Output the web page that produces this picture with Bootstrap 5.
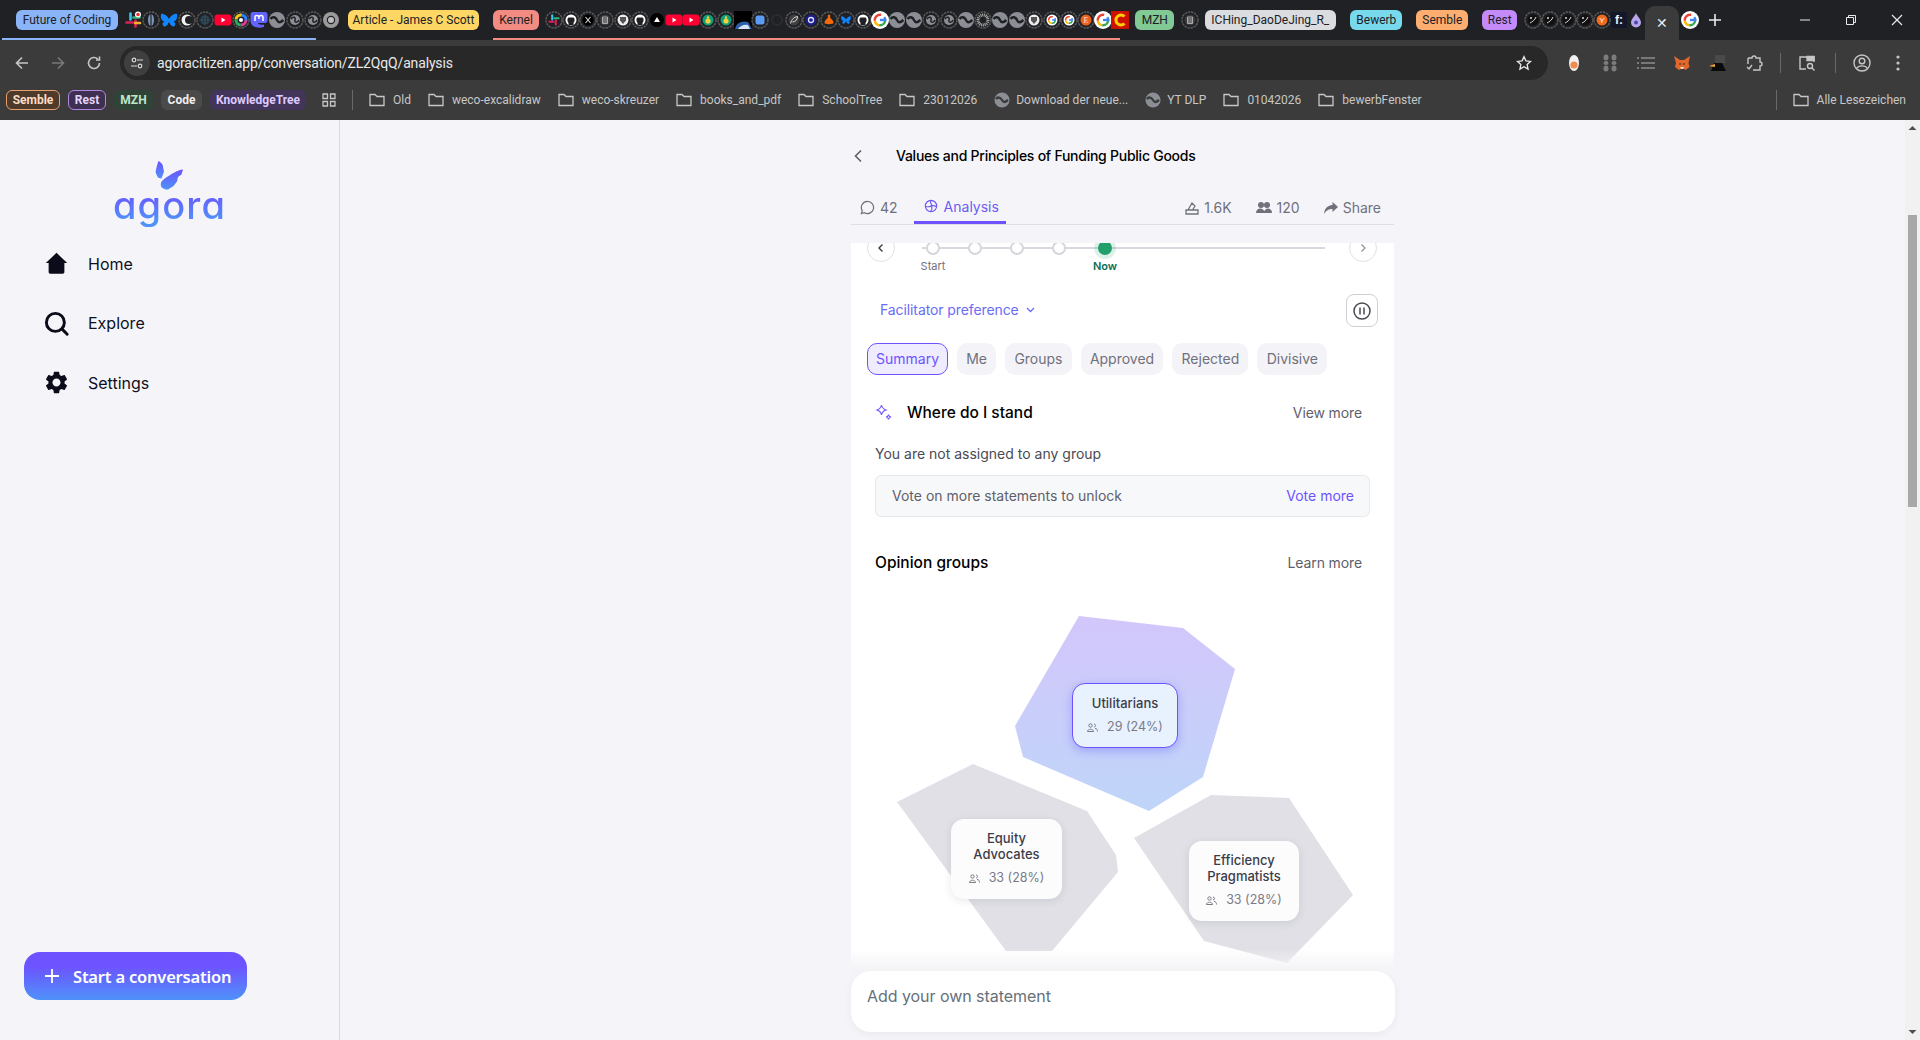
<!DOCTYPE html>
<html lang="en">
<head>
  <meta charset="UTF-8" />
  <title>Agora - Analysis</title>
  <link href="https://cdn.jsdelivr.net/npm/bootstrap@5.3.3/dist/css/bootstrap.min.css" rel="stylesheet">
  <style>
    html, body { height: 1040px; overflow: hidden; }
    body { font-family: Inter, "Noto Sans", sans-serif; background: #f5f5f9; color: #0f0f1e; }

    /* browser chrome */
    .tabstrip { height: 40px; background: #202124; font: 12px Roboto, sans-serif; color: #202124; }
    .tab-grp { position: relative; height: 40px; }
    .tab-grp::after { content: ""; position: absolute; left: 2px; bottom: 0; height: 2px; background: var(--grp); }
    .grp-blue { --grp: #8ab4f8; } .grp-blue::after { width: 314px; }
    .grp-red { --grp: #f28b82; margin-left: 14px; } .grp-red::after { left: 0; width: 627px; }
    .chip { height: 20px; border-radius: 6px; line-height: 20px; text-align: center; overflow: hidden; white-space: nowrap; flex: none; }
    .c-future { width: 102px; margin-left: 16px; background: #8ab4f8; }
    .c-article { width: 131px; margin-left: 8px; background: #fdd663; }
    .c-kernel { width: 46px; margin-left: 0; background: #f28b82; }
    .c-mzh { width: 39px; margin-left: 7px; background: #81c995; }
    .c-iching { width: 131px; margin-left: 6px; background: #dadce0; text-align: left; padding-left: 6px; }
    .c-bewerb { width: 52px; margin-left: 14px; background: #78d9ec; }
    .c-semble { width: 52px; margin-left: 14px; background: #fcad70; }
    .c-rest { width: 35px; margin-left: 14px; background: #c58af9; }
    .favs { display: flex; flex: none; }
    .favs svg { flex: none; display: block; }
    .fav18 svg { width: 18px; height: 18px; }
    .fav17 svg { width: 18px; height: 18px; margin-right: -.85px; }
    .favs-1 { margin-left: 6px; }
    .favs-2 { margin-left: 6px; }
    .favs-3 { margin-left: 7px; }
    .favs-4 { margin-left: 7px; }
    .active-tab { width: 34px; height: 34px; margin: 6px 0 0 1px; background: #3b3b3b; border-radius: 10px 10px 0 0; color: #e8eaed; font-size: 14px; flex: none; }
    .new-fav { margin-left: 2px; }
    .win-btn { width: 46px; color: #e8eaed; }

    .toolbar { height: 41px; background: #3b3b3b; padding: 5px 4px 0 4px; }
    .slot { width: 36px; height: 34px; flex: none; }
    .url-pill { height: 34px; margin-left: 8px; background: #282828; color: #e8e8e8; font: 14px Roboto, sans-serif; letter-spacing: -.16px; }
    .url-tune { width: 26px; height: 26px; margin: 0 7px 0 4px; background: #3f3f3f; }
    .tool-sep { width: 1px; height: 20px; background: #6a6a6a; flex: none; }
    .sep-wide { margin-left: 10px; }

    .bookmarks { height: 39px; background: #3b3b3b; padding: 0 0 2px 6px; font: 12px Roboto, sans-serif; color: #c7c7c7; white-space: nowrap; }
    .bm-chip { height: 20px; line-height: 18px; border: 1px solid transparent; border-radius: 6px; text-align: center; font-weight: 700; margin-right: 8px; flex: none; }
    .bm-semble { width: 54px; background: #4d3a2b; border-color: #e8a06c; color: #fbdcc3; }
    .bm-rest { width: 38px; background: #3e3050; border-color: #b386e6; color: #e7d4fb; }
    .bm-mzh { width: 39px; background: #2f4436; color: #bfe6cb; }
    .bm-code { width: 41px; background: #4a4a4a; color: #eee; }
    .bm-tree { width: 96px; background: #43345a; color: #dccbff; }
    .bm-item { display: flex; align-items: center; gap: 8px; margin-right: 17px; flex: none; }
    .bm-item svg { flex: none; }
    .bm-site { gap: 6px; }
    .bm-all { margin: 0 14px 0 16px; }

    /* page */
    .page-area { height: 920px; }
    .side { width: 340px; flex: none; border-right: 1px solid #dcdce0; }
    .wings { display: block; margin: 40px auto 0; }
    .logo-word { width: 130px; height: 44px; margin: -7px auto 0; font-size: 38px; line-height: 44px; font-weight: 500; letter-spacing: 1.1px; font-feature-settings: "cv11"; text-align: center;
      background: linear-gradient(#6c53ff 20%, #4f92f9 85%); -webkit-background-clip: text; background-clip: text; color: transparent; }
    .side-nav { margin-top: 7px; padding-left: 43px; }
    .side-item { height: 59.5px; gap: 18px; font-size: 16px; color: #0f0f1e; text-decoration: none; }
    .start-btn { width: 223px; height: 48px; margin: auto 0 40px 24px; padding: 0 0 0 20px; gap: 13px; border: 0; border-radius: 16px; color: #fff; white-space: nowrap;
      background: linear-gradient(#6c53ff 30%, #4f92f9); font: 600 16.5px "Noto Sans", sans-serif; letter-spacing: -.2px; }

    .center-wrap { min-width: 0; }
    .center-col { width: 543px; height: 920px; }
    .conv-head { height: 71px; }
    .back-ico { margin-left: 2px; }
    .conv-title { margin-left: 31px; font-size: 14px; font-weight: 500; letter-spacing: -.25px; color: #000; }
    .conv-tabs { height: 34px; padding-left: 9px; border-bottom: 1px solid #dedee3; font-size: 14px; color: #70707c; }
    .conv-tab { height: 33px; gap: 5px; }
    .tab-on { width: 92px; gap: 6px; margin-left: 16px; padding-left: 10px; color: #6c5cf5; border-bottom: 3px solid #6c53ff; }
    .stat-last { margin-right: 13px; }
    .panel { position: relative; flex: 1 1 auto; min-height: 0; overflow: hidden; background: #fff; margin-top: 18px; }
    .panel-fade { position: absolute; left: 0; right: 0; bottom: 0; height: 22px; background: linear-gradient(rgba(245,245,249,0), #f3f3f6); pointer-events: none; }
    .tl-row { margin-top: -9px; padding: 0 17px 0 16px; height: 40px; }
    .tl-btn { width: 28px; height: 28px; padding: 0; flex: none; background: #fff; border: 1px solid #e2e2e6; border-radius: 50%; }
    .tl-track { width: 403px; height: 33px; margin: 7px 0 0 27px; background: linear-gradient(#d8d8de, #d8d8de) 0 6px / 100% 2px no-repeat; }
    .tl-stops { margin-left: -10px; }
    .tl-stop { width: 42px; font-size: 11px; line-height: 14px; color: #70707c; }
    .tl-stop i { width: 14px; height: 14px; margin-bottom: 4px; background: #fff; border: 2px solid #d6d6dc; border-radius: 50%; }
    .tl-now { width: 46px; margin-left: 2px; color: #0d6e57; font-weight: 600; }
    .tl-now i { background: #229f6b; border-color: #229f6b; box-shadow: 0 0 0 4px rgba(34,159,107,.15); }
    .fac-row { height: 33px; margin-top: 20px; padding: 0 16px 0 29px; }
    .fac-link { gap: 7px; margin-top: -2px; font-size: 14px; letter-spacing: -.1px; color: #6a6cf6; }
    .pause-btn { width: 32px; height: 33px; padding: 0; background: #fff; border: 1px solid #cfcfd5; border-radius: 8px; }
    .pill-row { gap: 9px; margin-top: 16px; padding: 0 16px; }
    .sect-pill { height: 32px; padding: 0 9.2px; line-height: 32px; border-radius: 10px; background: #f4f4f8; color: #70707c; font-size: 14px; }
    .sect-pill.pill-on { padding: 0 8px; line-height: 30px; border: 1px solid #6c53ff; background: #efecff; color: #6c53ff; }
    .sect-head { height: 24px; padding: 0 32px 0 24px; }
    .sect-title { font-size: 15.5px; font-weight: 500; color: #000; }
    .sect-more { margin-top: -1px; font-size: 14px; letter-spacing: -.12px; color: #5f5f6b; }
    .stand-ico { margin-right: 14px; }
    .m-stand { margin-top: 26px; }
    .not-assigned { margin: 19px 0 0 24px; font-size: 14px; line-height: 20px; color: #4a4a55; }
    .unlock-box { height: 42px; margin: 11px 24px 0 24px; padding: 0 15px 2px 16px; background: #f7f8f9; border: 1px solid #e8e9ec; border-radius: 6px; font-size: 14px; color: #5f5f6b; }
    .unlock-box a { color: #6c53ff; text-decoration: none; }
    .m-opinion { margin-top: 34px; }

    /* free canvas: the polygons of the opinion map */
    .op-map { position: relative; width: 543px; height: 386px; margin-top: 10px; }
    .op-map > svg { display: block; }
    .op-card { position: absolute; padding-top: 11px; background: #fcfcfd; border-radius: 13px; box-shadow: 0 2px 8px rgba(30,30,60,.1); text-align: center; font-size: 13px; line-height: 16px; font-weight: 500; color: #3c3c48; }
    .op-card small { display: flex; justify-content: center; align-items: center; gap: 9px; margin-top: 8px; font-size: 12.5px; font-weight: 400; color: #7a7a85; }
    .op-util { left: 221px; top: 98px; width: 106px; height: 65px; background: #e8f2ff; border: 1px solid #6c53ff; box-shadow: 0 3px 10px rgba(80,80,255,.35); }
    .op-eq { left: 100px; top: 234px; width: 111px; height: 80px; }
    .op-eff { left: 338px; top: 256px; width: 110px; height: 80px; }

    .add-bar { width: 544px; height: 61px; margin-bottom: 8px; padding: 0 0 11px 16px; flex: none; background: #fff; border-radius: 20px; box-shadow: 0 2px 8px rgba(0,0,0,.05); font-size: 16px; letter-spacing: -.05px; color: #66707a; }
    .scroll-rail { width: 15px; flex: none; background: #f1f1f1; }
    .scroll-thumb { width: 9px; height: 292px; margin: 79px 0 auto 3px; background: #a8a8a8; }
    .scroll-cap { height: 16px; }
  </style>
</head>
<body class="d-flex flex-column">

  <div class="tabstrip d-flex align-items-center">
    <div class="tab-grp grp-blue d-flex align-items-center">
      <div class="chip c-future">Future of Coding</div>
      <div class="favs fav18 favs-1" data-favs="slack eye bsky moon cross yt wheel masto globe ringglobe ringglobe chrome"></div>
    </div>
    <div class="chip c-article">Article - James C Scott</div>
    <div class="tab-grp grp-red d-flex align-items-center">
      <div class="chip c-kernel">Kernel</div>
      <div class="favs fav17 favs-2" data-favs="rslack rgit rx rtrash rshield rgit tri yt yt rbug rbug space rblue faint rfeather rgear rorange rbsky rgit g globe globe ringglobe ringglobe globe rdots globe globe rshield rg rg re g cc"></div>
    </div>
    <div class="chip c-mzh">MZH</div>
    <div class="favs fav18 favs-3" data-favs="rtrash"></div>
    <div class="chip c-iching">ICHing_DaoDeJing_R_</div>
    <div class="chip c-bewerb">Bewerb</div>
    <div class="chip c-semble">Semble</div>
    <div class="chip c-rest">Rest</div>
    <div class="favs fav17 favs-4" data-favs="rf rf rf rf ry fcolon drop"></div>
    <div class="active-tab d-flex align-items-center justify-content-center">✕</div>
    <div class="favs fav18 new-fav" data-favs="g"></div>
    <svg class="ms-2" width="16" height="16" viewBox="0 0 16 16"><path d="M8 2v12M2 8h12" stroke="#e8eaed" stroke-width="1.6"/></svg>
    <div class="win-btn ms-auto d-flex justify-content-center"><svg width="12" height="12" viewBox="0 0 12 12"><path d="M1 6h10" stroke="#c8c8c8" stroke-width="1.2"/></svg></div>
    <div class="win-btn d-flex justify-content-center"><svg width="12" height="12" viewBox="0 0 12 12" fill="none" stroke="#e8eaed"><path d="M1.5 3.5h7v7h-7zM3.5 3.5v-2h7v7h-2"/></svg></div>
    <div class="win-btn d-flex justify-content-center"><svg width="14" height="14" viewBox="0 0 14 14"><path d="M2 2l10 10M12 2L2 12" stroke="#e8eaed" stroke-width="1.2"/></svg></div>
  </div>

  <div class="toolbar d-flex align-items-center">
    <div class="slot d-flex align-items-center justify-content-center"><svg width="16" height="16" viewBox="0 0 16 16" fill="none" stroke="#c4c7c5" stroke-width="1.6"><path d="M14 8H2.5M8 2.5L2.5 8 8 13.5"/></svg></div>
    <div class="slot d-flex align-items-center justify-content-center"><svg width="16" height="16" viewBox="0 0 16 16" fill="none" stroke="#77797a" stroke-width="1.6"><path d="M2 8h11.5M8 2.5L13.5 8 8 13.5"/></svg></div>
    <div class="slot d-flex align-items-center justify-content-center"><svg width="16" height="16" viewBox="0 0 16 16" fill="none" stroke="#c4c7c5" stroke-width="1.6"><path d="M13.5 8a5.5 5.5 0 1 1-1.7-4"/><path d="M13.5 1.5V5H10"/></svg></div>
    <div class="url-pill rounded-pill flex-grow-1 d-flex align-items-center">
      <div class="url-tune rounded-circle d-flex align-items-center justify-content-center"><svg width="14" height="14" viewBox="0 0 14 14" fill="none" stroke="#d8d8d8" stroke-width="1.2"><circle cx="4" cy="4" r="1.8"/><path d="M7 4h6M1 10h6"/><circle cx="10" cy="10" r="1.8"/></svg></div>
      <span>agoracitizen.app/conversation/ZL2QqQ/analysis</span>
      <svg class="ms-auto me-3" width="16" height="16" viewBox="0 0 24 24" fill="none" stroke="#e8e8e8" stroke-width="2"><path d="M12 2.5l2.9 6.3 6.9.8-5.1 4.7 1.4 6.8-6.1-3.5-6.1 3.5 1.4-6.8L2.3 9.600l6.9-.8z"/></svg>
    </div>
    <div class="slot ms-2 d-flex align-items-center justify-content-center"><svg width="12" height="18" viewBox="0 0 12 18"><ellipse cx="6" cy="9" rx="5" ry="8" fill="#f1f1f1"/><circle cx="6" cy="11" r="3.6" fill="#f28b4b"/></svg></div>
    <div class="slot d-flex align-items-center justify-content-center"><svg width="18" height="18" viewBox="0 0 18 18" fill="#7c7c7c"><ellipse cx="5" cy="3.5" rx="2.5" ry="3"/><ellipse cx="13" cy="3.5" rx="2.5" ry="3"/><ellipse cx="5" cy="9" rx="2.5" ry="2"/><ellipse cx="13" cy="9" rx="2.5" ry="2"/><ellipse cx="5" cy="14.5" rx="2.5" ry="3"/><ellipse cx="13" cy="14.5" rx="2.5" ry="3"/></svg></div>
    <div class="slot d-flex align-items-center justify-content-center"><svg width="18" height="14" viewBox="0 0 18 14" stroke="#8d8d8d" stroke-width="1.5"><path d="M4 2h14M4 7h14M4 12h14M0 2h2M0 7h2M0 12h2"/></svg></div>
    <div class="slot d-flex align-items-center justify-content-center"><svg width="18" height="18" viewBox="0 0 18 18"><path d="M1 2l6 4h4l6-4-1.5 7 1 4-4 3-1.5-1h-3L6 16l-4-3 1-4z" fill="#e2672a"/><path d="M6.5 9l2 1-2 1zM11.5 9l-2 1 2 1z" fill="#2a2a2a"/><path d="M7 13h4l-1 2H8z" fill="#f0d8c0"/></svg></div>
    <div class="slot d-flex align-items-center justify-content-center"><svg width="18" height="18" viewBox="0 0 18 18"><path d="M6 1h10v8H6z" fill="#4a4a4a"/><path d="M2 17l3-8h8l4 8z" fill="#0a0a0a"/><path d="M0 12l6-2v3z" fill="#f2a13a"/></svg></div>
    <div class="slot d-flex align-items-center justify-content-center"><svg width="18" height="18" viewBox="0 0 18 18" fill="none" stroke="#c4c7c5" stroke-width="1.4"><path d="M3 4h4a2 2 0 0 1 4 0h4v4a2 2 0 0 1 0 4v4H8M3 4v6"/><path d="M2 13l2 2 3-4"/></svg></div>
    <div class="tool-sep ms-2"></div>
    <div class="slot ms-2 d-flex align-items-center justify-content-center"><svg width="18" height="18" viewBox="0 0 18 18" fill="none" stroke="#c4c7c5" stroke-width="1.4"><path d="M8 15H2V3h14v5"/><path d="M9 2.5h7v4H9z" fill="#c4c7c5"/><circle cx="12" cy="12" r="2.5"/><path d="M14 14l2.5 2.5"/></svg></div>
    <div class="tool-sep sep-wide"></div>
    <div class="slot ms-2 d-flex align-items-center justify-content-center"><svg width="18" height="18" viewBox="0 0 18 18" fill="none" stroke="#c4c7c5" stroke-width="1.4"><circle cx="9" cy="9" r="8"/><circle cx="9" cy="7" r="2.8"/><path d="M3.5 14.5c2-3.5 9-3.5 11 0"/></svg></div>
    <div class="slot d-flex align-items-center justify-content-center"><svg width="4" height="16" viewBox="0 0 4 16" fill="#c4c7c5"><circle cx="2" cy="2" r="1.6"/><circle cx="2" cy="8" r="1.6"/><circle cx="2" cy="14" r="1.6"/></svg></div>
  </div>

  <div class="bookmarks d-flex align-items-center">
    <div class="bm-chip bm-semble">Semble</div>
    <div class="bm-chip bm-rest">Rest</div>
    <div class="bm-chip bm-mzh">MZH</div>
    <div class="bm-chip bm-code">Code</div>
    <div class="bm-chip bm-tree">KnowledgeTree</div>
    <svg class="ms-2" width="14" height="14" viewBox="0 0 14 14" fill="none" stroke="#c7c7c7" stroke-width="1.3"><path d="M1 1h4.5v4.5H1zM8.5 1H13v4.5H8.5zM1 8.5h4.5V13H1zM8.5 8.5H13V13H8.5z"/></svg>
    <div class="tool-sep mx-3"></div>
    <div id="bmList" class="d-flex align-items-center"></div>
    <div class="tool-sep ms-auto"></div>
    <div class="bm-item bm-all"><svg width="16" height="14" viewBox="0 0 16 14" fill="none" stroke="#c7c7c7" stroke-width="1.3"><path d="M1 1.5h5l2 2h7v9H1z"/></svg><span>Alle Lesezeichen</span></div>
  </div>

  <div class="page-area d-flex">
    <aside class="side d-flex flex-column">
      <svg class="wings" width="30" height="30" viewBox="0 0 30 30">
        <defs><linearGradient id="wingGrad" x1="0" y1="0" x2="0" y2="1"><stop offset="0" stop-color="#6c53ff"/><stop offset="1" stop-color="#4f92f9"/></linearGradient></defs>
        <path d="M3.500 1C6 2.500 8.500 5 8 7L9 11.500 6.500 18.500C4.500 18.500 3.500 18 2.800 17.300 1 14 .3 12 .8 10.700 1.500 7 2.500 4 3.500 1z" fill="url(#wingGrad)"/>
        <path d="M28 9.500l-1.500 5-3.500 2.500-1 4.500-3.500 4.500-5.500 3.500c-2.500.2-5.300-.8-6.800-2.800-.8-2-.4-4 .8-5.600 1.800-2.300 3.600-3.400 5.700-4.700 4.500-2.500 9.500-6.300 15.300-6.900z" fill="url(#wingGrad)"/>
      </svg>
      <div class="logo-word">agora</div>
      <nav class="side-nav">
        <a class="side-item d-flex align-items-center" href="#"><svg width="27" height="27" viewBox="0 0 24 24" fill="#0b0b1a"><path d="M12 2.5L2.5 11.5H5v8c0 1 .6 1.500 1.500 1.500h11c.9 0 1.500-.5 1.500-1.500v-8h2.500z"/></svg>Home</a>
        <a class="side-item d-flex align-items-center" href="#"><svg width="27" height="27" viewBox="0 0 24 24" fill="none" stroke="#0b0b1a" stroke-width="2.6"><circle cx="11" cy="11" r="8"/><path d="M17 17l4.5 4.5" stroke-linecap="round"/></svg>Explore</a>
        <a class="side-item d-flex align-items-center" href="#"><svg width="27" height="27" viewBox="0 0 24 24" fill="#0b0b1a"><path d="M19.14 12.94c.04-.3.06-.61.06-.94 0-.32-.02-.64-.07-.94l2.03-1.58c.18-.14.23-.41.12-.61l-1.92-3.32c-.12-.22-.37-.29-.59-.22l-2.39.96c-.5-.38-1.03-.7-1.62-.94l-.36-2.54c-.04-.24-.24-.41-.48-.41h-3.84c-.24 0-.43.17-.47.41l-.36 2.54c-.59.24-1.13.57-1.62.94l-2.39-.96c-.22-.08-.47 0-.59.22L2.74 8.87c-.12.21-.08.47.12.61l2.03 1.58c-.05.3-.09.63-.09.94s.02.64.07.94l-2.03 1.58c-.18.14-.23.41-.12.61l1.92 3.32c.12.22.37.29.59.22l2.39-.96c.5.38 1.03.7 1.62.94l.36 2.54c.05.24.24.41.48.41h3.84c.24 0 .44-.17.47-.41l.36-2.54c.59-.24 1.13-.56 1.62-.94l2.39.96c.22.08.47 0 .59-.22l1.92-3.32c.12-.22.07-.47-.12-.61l-2.01-1.58zM12 15.6c-1.98 0-3.6-1.62-3.6-3.6s1.62-3.6 3.6-3.6 3.6 1.62 3.6 3.6-1.62 3.6-3.6 3.6z"/></svg>Settings</a>
      </nav>
      <button class="start-btn d-flex align-items-center"><svg width="16" height="16" viewBox="0 0 16 16"><path d="M8 1v14M1 8h14" stroke="#fff" stroke-width="1.8"/></svg>Start a conversation</button>
    </aside>

    <main class="center-wrap flex-grow-1 d-flex justify-content-center">
      <div class="center-col d-flex flex-column">
        <div class="conv-head d-flex align-items-center">
          <svg class="back-ico" width="12" height="14" viewBox="0 0 12 14" fill="none" stroke="#5f5f6b" stroke-width="1.6"><path d="M8 1.5L2.5 7 8 12.5"/></svg>
          <div class="conv-title">Values and Principles of Funding Public Goods</div>
        </div>
        <div class="conv-tabs d-flex align-items-start">
          <div class="conv-tab d-flex align-items-center"><svg width="15" height="15" viewBox="0 0 16 16" fill="none" stroke="#70707c" stroke-width="1.3"><path d="M8 1.5a6.500 6.500 0 1 1-3.300 12.100L1.500 14.500l.9-3.100A6.500 6.500 0 0 1 8 1.500z"/></svg>42</div>
          <div class="conv-tab tab-on d-flex align-items-center"><svg width="14" height="14" viewBox="0 0 16 16" fill="none" stroke="#6c5cf5" stroke-width="1.3"><circle cx="8" cy="8" r="6.5"/><path d="M8 1.5C5 5 11 6 8 8s-6 0-6.500 1M8 8c2 2 1 5-1 6.500M8 8c3-1 5 0 6.500 1"/></svg>Analysis</div>
          <div class="conv-tab ms-auto d-flex align-items-center"><svg width="14" height="15" viewBox="0 0 14 15" fill="none" stroke="#70707c" stroke-width="1.3"><path d="M1 10h12v4H1zM3 10l4-7 3 3-2.500 4"/></svg>1.6K</div>
          <div class="conv-tab ms-4 d-flex align-items-center"><svg width="16" height="13" viewBox="0 0 16 13" fill="#70707c"><circle cx="5" cy="4" r="3"/><circle cx="11" cy="4" r="3"/><path d="M0 12c0-6 8-6 9 0zM8 12c0-6 8-6 8 0z"/></svg>120</div>
          <div class="conv-tab ms-4 stat-last d-flex align-items-center"><svg width="14" height="12" viewBox="0 0 14 12" fill="#70707c"><path d="M8.500 0L14 5 8.500 10V7C5 7 2.500 8 0 12 .5 7 3 3.500 8.500 3z"/></svg>Share</div>
        </div>

        <div class="panel">
          <div class="tl-row d-flex align-items-start">
            <button class="tl-btn d-flex align-items-center justify-content-center"><svg width="10" height="10" viewBox="0 0 10 10" fill="none" stroke="#3c3c48" stroke-width="1.4"><path d="M6.5 1.5L3 5l3.5 3.5"/></svg></button>
            <div class="tl-track">
              <div class="tl-stops d-flex">
                <div class="tl-stop d-flex flex-column align-items-center"><i></i>Start</div>
                <div class="tl-stop d-flex flex-column align-items-center"><i></i></div>
                <div class="tl-stop d-flex flex-column align-items-center"><i></i></div>
                <div class="tl-stop d-flex flex-column align-items-center"><i></i></div>
                <div class="tl-stop tl-now d-flex flex-column align-items-center"><i></i>Now</div>
              </div>
            </div>
            <button class="tl-btn ms-auto d-flex align-items-center justify-content-center"><svg width="10" height="10" viewBox="0 0 10 10" fill="none" stroke="#9a9aa4" stroke-width="1.4"><path d="M3.5 1.5L7 5 3.5 8.5"/></svg></button>
          </div>

          <div class="fac-row d-flex align-items-center justify-content-between">
            <div class="fac-link d-flex align-items-center">Facilitator preference <svg width="9" height="6" viewBox="0 0 9 6" fill="none" stroke="#6a6cf6" stroke-width="1.3"><path d="M1 1l3.5 3.5L8 1"/></svg></div>
            <button class="pause-btn d-flex align-items-center justify-content-center"><svg width="18" height="18" viewBox="0 0 18 18" fill="none" stroke="#4a4a55" stroke-width="1.5"><circle cx="9" cy="9" r="8"/><path d="M7 5.5v7M11 5.500v7"/></svg></button>
          </div>

          <div class="pill-row d-flex">
            <div class="sect-pill pill-on">Summary</div>
            <div class="sect-pill">Me</div>
            <div class="sect-pill">Groups</div>
            <div class="sect-pill">Approved</div>
            <div class="sect-pill">Rejected</div>
            <div class="sect-pill">Divisive</div>
          </div>

          <div class="sect-head m-stand d-flex align-items-center">
            <svg class="stand-ico" width="18" height="18" viewBox="0 0 18 18" fill="none" stroke="#6c53ff" stroke-width="1.1"><path d="M6.5 1C7 4 8 5 11 6 8 7 7 8 6.500 11 6 8 5 7 2 6 5 5 6 4 6.500 1zM13.500 10.500c.2 1.500 1 2.300 2.500 2.500-1.500.2-2.300 1-2.500 2.500-.2-1.500-1-2.300-2.500-2.500 1.500-.2 2.300-1 2.500-2.500z"/></svg>
            <div class="sect-title">Where do I stand</div>
            <div class="sect-more ms-auto">View more</div>
          </div>
          <div class="not-assigned">You are not assigned to any group</div>
          <div class="unlock-box d-flex align-items-center justify-content-between">
            <span>Vote on more statements to unlock</span>
            <a href="#">Vote more</a>
          </div>

          <div class="sect-head m-opinion d-flex align-items-center">
            <div class="sect-title">Opinion groups</div>
            <div class="sect-more ms-auto">Learn more</div>
          </div>

          <div class="op-map">
            <svg width="543" height="386" viewBox="0 0 543 386">
              <defs><linearGradient id="utilGrad" x1="0" y1="0" x2="0" y2="1"><stop offset="0" stop-color="#d3c6fb"/><stop offset="1" stop-color="#bfd5f9"/></linearGradient></defs>
              <polygon points="228,31 332,43 384,84 352,192 298,226 172,172 164,141" fill="url(#utilGrad)"/>
              <polygon points="122,179 236,226 265,270 267,287 201,366 155,366 46,217" fill="#e0e0e6"/>
              <polygon points="360,210 438,213 502,310 436,378 353,356 283,253" fill="#e0e0e6"/>
            </svg>
            <div class="op-card op-util">Utilitarians<small><svg width="11" height="9" viewBox="0 0 11 9" fill="none" stroke="#7a7a85"><circle cx="3.5" cy="2.5" r="1.7"/><path d="M.5 8.500c0-3 6-3 6 0zM7 1c2 0 2 3 0 3M8 5.500c2 0 2.500 1.500 2.500 3"/></svg>29 (24%)</small></div>
            <div class="op-card op-eq">Equity<br>Advocates<small><svg width="11" height="9" viewBox="0 0 11 9" fill="none" stroke="#7a7a85"><circle cx="3.5" cy="2.5" r="1.7"/><path d="M.5 8.500c0-3 6-3 6 0zM7 1c2 0 2 3 0 3M8 5.500c2 0 2.500 1.500 2.500 3"/></svg>33 (28%)</small></div>
            <div class="op-card op-eff">Efficiency<br>Pragmatists<small><svg width="11" height="9" viewBox="0 0 11 9" fill="none" stroke="#7a7a85"><circle cx="3.5" cy="2.5" r="1.7"/><path d="M.5 8.500c0-3 6-3 6 0zM7 1c2 0 2 3 0 3M8 5.500c2 0 2.500 1.500 2.500 3"/></svg>33 (28%)</small></div>
          </div>
          <div class="panel-fade"></div>
        </div>

        <div class="add-bar d-flex align-items-center">Add your own statement</div>
      </div>
    </main>

    <div class="scroll-rail d-flex flex-column">
      <svg class="scroll-cap" width="15" height="16" viewBox="0 0 15 16"><path d="M3.5 10l4-4 4 4z" fill="#505050"/></svg>
      <div class="scroll-thumb"></div>
      <svg class="scroll-cap" width="15" height="16" viewBox="0 0 15 16"><path d="M3.5 6l4 4 4-4z" fill="#505050"/></svg>
    </div>
  </div>

  <script src="https://cdn.jsdelivr.net/npm/bootstrap@5.3.3/dist/js/bootstrap.bundle.min.js"></script>
  <script>
    // tab favicons, drawn in an 18x18 box
    const ring = '<circle cx="9" cy="9" r="8" fill="none" stroke="#5c5c5c" stroke-width="1.4" stroke-dasharray="2.4 .8"/>';
    const gArcs = (r, w) => {
      const c = 2 * Math.PI * r;
      const arc = (col, len, off) => `<circle cx="9" cy="9" r="${r}" fill="none" stroke="${col}" stroke-width="${w}" stroke-dasharray="${len * c} ${c}" stroke-dashoffset="${-off * c}"/>`;
      return arc('#4285f4', .2, .88) + arc('#4285f4', .02, 0) + arc('#34a853', .25, .02) + arc('#fbbc05', .2, .27) + arc('#ea4335', .3, .47)
        + `<path d="M9 9h${r + w / 2}" stroke="#4285f4" stroke-width="${w}"/>`;
    };
    const swirl = (r, dark) => `<circle cx="9" cy="9" r="${r}" fill="#8b8e94"/><path d="M${9 - r * .8} 8c2-3 5-2 ${r * .8} 1s3 3 ${r * .8} 0" fill="none" stroke="${dark}" stroke-width="${r * .3}"/>`;
    const git = '<circle cx="9" cy="9" r="5.5" fill="#fff"/><path d="M6.5 14V12C5 10 5 7.5 6.5 6.5h5c1.5 1 1.5 3.5 0 5.5v2z" fill="#202124"/>';
    const bug = '<circle cx="9" cy="9" r="5.5" fill="#0f9d7a"/><circle cx="9" cy="10" r="2.6" fill="#f4d03f"/><circle cx="9" cy="6.5" r="1.2" fill="#f4d03f"/>';
    const butterfly = s => `<path transform="translate(9 9) scale(${s}) translate(-9 -9)" d="M9 8C7.5 5 4 2.5 1.5 3c-1 4 .5 7 3.5 7.5C3 11 2 13 4 15c2.5 1 4-2 5-4 1 2 2.5 5 5 4 2-2 1-4-1-4.5 3-.5 4.5-3.5 3.5-7.5C14 2.5 10.5 5 9 8z" fill="#1185fe"/>`;
    const favKinds = {
      slack: '<g stroke-linecap="round" stroke-width="2.6" fill="none"><path d="M6.5 2.5v6" stroke="#36c5f0"/><path d="M11.5 9.5v6" stroke="#e01e5a"/><path d="M2.5 11.5h6" stroke="#e01e5a"/><path d="M9.5 6.5h6" stroke="#2eb67d"/><path d="M11 12h5" stroke="#ecb22e"/></g><circle cx="14" cy="3.5" r="3" fill="#fff"/><circle cx="14" cy="3.5" r="1.8" fill="#e33"/>',
      eye: ring + '<ellipse cx="9" cy="9" rx="3" ry="6" fill="#7d95b8"/><path d="M9 3v12" stroke="#20242c" stroke-width="1.2"/>',
      bsky: butterfly(1.05),
      moon: ring + '<circle cx="9" cy="9" r="5.5" fill="#f2f2f2"/><circle cx="11" cy="9" r="4" fill="#202124"/>',
      cross: ring + '<circle cx="9" cy="9" r="5.5" fill="#1d2a33"/><path d="M6 6h6v6H6zM9 3.5v11M3.5 9h11" fill="none" stroke="#3a5566"/>',
      yt: '<rect x="0.5" y="3.5" width="17" height="11" rx="3" fill="#ff0033"/><path d="M7.5 6.5l4 2.5-4 2.5z" fill="#fff"/>',
      wheel: ring + '<circle cx="9" cy="9" r="5" fill="none" stroke="#e6399b" stroke-width="3" stroke-dasharray="7.8 23.6"/><circle cx="9" cy="9" r="5" fill="none" stroke="#27ae60" stroke-width="3" stroke-dasharray="7.8 23.6" stroke-dashoffset="-8"/><circle cx="9" cy="9" r="5" fill="none" stroke="#f1c40f" stroke-width="3" stroke-dasharray="7.8 23.6" stroke-dashoffset="-16"/><circle cx="9" cy="9" r="5" fill="none" stroke="#2980ff" stroke-width="3" stroke-dasharray="7.8 23.6" stroke-dashoffset="-24"/><circle cx="9" cy="9" r="2" fill="#fff"/>',
      masto: '<path d="M3 1h12c1.5 0 2.5 1 2.5 2.5v6c0 1.5-1 2.5-2.5 2.5H8c0 1.5 3 2 6 1.5v2.5C9 17.5 1 17 .5 10V3.5C.5 2 1.5 1 3 1z" fill="#6364ff"/><path d="M5 10V6c0-2 3.5-2 4 0v2M9 8V6c.5-2 4-2 4 0v4" fill="none" stroke="#fff" stroke-width="1.5"/>',
      globe: swirl(8, '#202124'),
      ringglobe: ring + swirl(5, '#202124'),
      chrome: '<circle cx="9" cy="9" r="8" fill="#9a9a9a"/><circle cx="9" cy="9" r="4.2" fill="#202124"/><circle cx="9" cy="9" r="3" fill="#bdbdbd"/>',
      rslack: ring + '<g transform="translate(2.5 2.5) scale(.72)" stroke-linecap="round" stroke-width="2.8" fill="none"><path d="M6.5 2.5v6" stroke="#36c5f0"/><path d="M11.5 9.5v6" stroke="#e01e5a"/><path d="M2.5 11.5h6" stroke="#e01e5a"/><path d="M9.5 6.5h6" stroke="#2eb67d"/></g>',
      rgit: ring + git,
      rx: ring + '<circle cx="9" cy="9" r="5.5" fill="#000"/><path d="M6.5 6l5 6M11.5 6l-5 6" stroke="#ddd" stroke-width="1.1"/>',
      rtrash: ring + '<circle cx="9" cy="9" r="5.5" fill="#3a3a3a"/><path d="M6.5 6h5v6.5h-5zM8 7v5M10 7v5" fill="none" stroke="#c8c8c8" stroke-width=".8"/>',
      rshield: ring + '<circle cx="9" cy="9" r="5.5" fill="#ececec"/><path d="M6 6h6v3.5L9 13 6 9.5z" fill="#555"/>',
      tri: '<circle cx="9" cy="9" r="7" fill="#000"/><path d="M9 6l3 5H6z" fill="#fff"/>',
      rbug: ring + bug,
      space: '<rect x="0" y="0" width="18" height="18" fill="#000"/><path d="M1 18c1-6 7-9 13-7l4 7z" fill="#2b5fa8"/><path d="M4 18c2-3 6-5 10-4l2 4z" fill="#d6e4f5"/>',
      rblue: ring + '<rect x="4.5" y="4.5" width="9" height="9" rx="2.5" fill="#5b9bf5"/>',
      faint: '<circle cx="9" cy="9" r="5" fill="none" stroke="#3a3a3a" stroke-width="1.5" stroke-dasharray="1 1"/>',
      rfeather: ring + '<circle cx="9" cy="9" r="5.5" fill="#3f3f3f"/><path d="M5.5 12.5C7 8 9 6 12.5 5.5 12.5 9 10 11 7.5 11" fill="none" stroke="#ddd"/>',
      rgear: ring + '<circle cx="9" cy="9" r="5.5" fill="#1c1f8a"/><circle cx="9" cy="9" r="2.5" fill="none" stroke="#dfe2ff" stroke-width="1.3"/>',
      rorange: ring + '<path d="M9 3.5c1.5 0 1.5 2 1 3 1.5 2 3.5 3 3.5 5.5 0 1.5-9 1.5-9 0 0-2.5 2-3.5 3.5-5.500-.5-1-.5-3 1-3z" fill="#f46a0a"/>',
      rbsky: ring + butterfly(.62),
      g: '<circle cx="9" cy="9" r="9" fill="#fff"/>' + gArcs(5.2, 2.4),
      rdots: ring + '<circle cx="9" cy="9" r="5" fill="none" stroke="#a8a8a8" stroke-width="3" stroke-dasharray="1 .7"/>',
      rg: ring + '<circle cx="9" cy="9" r="5.5" fill="#fff"/>' + gArcs(3.3, 1.5),
      re: ring + '<circle cx="9" cy="9" r="5.5" fill="#e8601c"/><text x="9" y="11.8" text-anchor="middle" font-family="Liberation Serif" font-size="8" fill="#ffe4d0">E</text>',
      cc: '<rect width="18" height="18" fill="#cc1100"/><path d="M13.5 5.5a5 5 0 1 0 0 7" fill="none" stroke="#ffcc00" stroke-width="3"/>',
      rf: ring + '<circle cx="9" cy="9" r="5.5" fill="#111"/><path d="M6 12c2-1 5-3 6-6" fill="none" stroke="#ddd"/><circle cx="7" cy="7" r="1" fill="#ddd"/>',
      ry: ring + '<circle cx="9" cy="9" r="5.5" fill="#f26a1b"/><text x="9" y="12" text-anchor="middle" font-family="Liberation Sans" font-size="8" fill="#fff">Y</text>',
      fcolon: '<rect x="1" y="1" width="16" height="16" fill="#14172b"/><text x="9" y="13" text-anchor="middle" font-family="Liberation Sans" font-size="12" font-weight="700" fill="#f2f2f2">f:</text>',
      drop: '<path d="M9 2c1 3 5 6 5 9.5a5 5 0 0 1-10 0C4 8 8 5 9 2z" fill="#b9a5ea"/><circle cx="9" cy="11.5" r="2" fill="#4a4aa8"/>'
    };
    document.querySelectorAll('[data-favs]').forEach(box => {
      box.innerHTML = box.dataset.favs.split(' ').map(k => `<svg viewBox="0 0 18 18">${favKinds[k]}</svg>`).join('');
    });

    // bookmark bar
    const folderIco = '<svg width="16" height="14" viewBox="0 0 16 14" fill="none" stroke="#c7c7c7" stroke-width="1.3"><path d="M1 1.5h5l2 2h7v9H1z"/></svg>';
    const globeIco = '<svg width="16" height="16" viewBox="0 0 18 18">' + swirl(8.5, '#3b3b3b') + '</svg>';
    const bookmarks = [
      ['f', 'Old'], ['f', 'weco-excalidraw'], ['f', 'weco-skreuzer'], ['f', 'books_and_pdf'], ['f', 'SchoolTree'],
      ['f', '23012026'], ['g', 'Download der neue...'], ['g', 'YT DLP'], ['f', '01042026'], ['f', 'bewerbFenster']
    ];
    document.getElementById('bmList').innerHTML = bookmarks.map(b =>
      `<div class="bm-item${b[0] === 'f' ? '' : ' bm-site'}">${b[0] === 'f' ? folderIco : globeIco}<span>${b[1]}</span></div>`).join('');
  </script>
</body>
</html>
